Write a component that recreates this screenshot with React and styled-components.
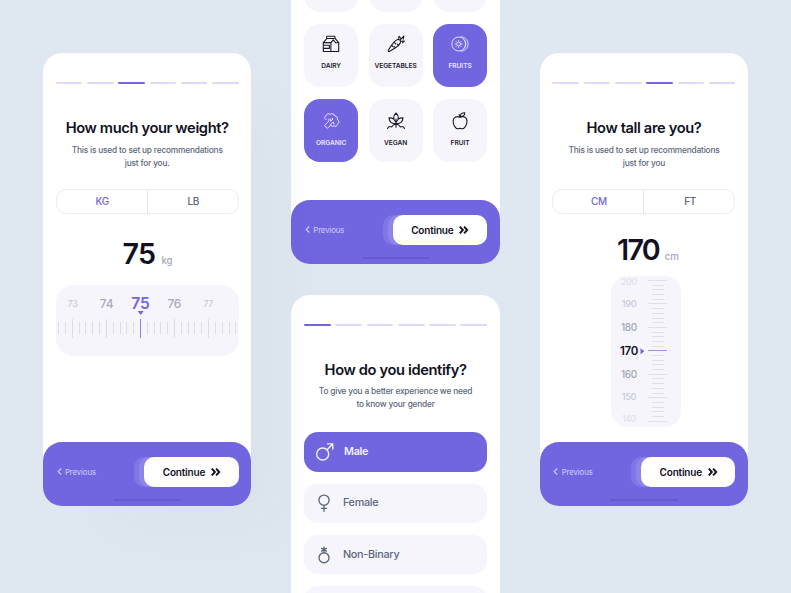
import React from "react";
import styled, { createGlobalStyle, css } from "styled-components";

const violet = "#7165e0";
const ink = "#11111f";
const slate = "#5b677b";
const tint = "#f6f5fb";

const GlobalStyle = createGlobalStyle`
  * { box-sizing: border-box; }
  html, body { margin: 0; background: #dfe8f1; }
  body { font-family: Inter, "Liberation Sans", sans-serif; overflow: hidden; }
  svg { display: block; flex: none; }
`;

const Board = styled.main`
  width: 791px;
  height: 593px;
  overflow: hidden;
  display: flex;
  align-items: flex-start;
  gap: 40px;
  padding-left: 43px;
  background: #dfe8f1;
`;

const Column = styled.div`
  display: flex;
  flex-direction: column;
  flex: none;
  width: 208.4px;
  gap: 31px;
`;

const Phone = styled.section`
  display: flex;
  flex-direction: column;
  flex: none;
  width: 208.4px;
  height: ${(p) => p.$height}px;
  margin-top: ${(p) => p.$top || 0}px;
  border-radius: 19px;
  background: #fff;
  ${(p) =>
    p.$raised &&
    css`
      position: relative;
      z-index: 1;
      box-shadow: 50px 36px 60px -14px rgba(70, 70, 90, 0.028);
    `}
`;

const Content = styled.div`
  display: flex;
  flex-direction: column;
  align-items: center;
  flex: 1;
  min-height: 0;
  padding: ${(p) => p.$top ?? 28.7}px 12.7px 0;
`;

const Steps = styled.div`
  display: flex;
  gap: 4.7px;
  width: 100%;
`;

const Step = styled.span`
  flex: 1;
  height: 2px;
  border-radius: 1px;
  background: ${(p) => (p.$active ? violet : "#dedafa")};
`;

const Title = styled.h1`
  margin: 34px 0 0;
  font-size: 14.7px;
  line-height: 20px;
  font-weight: 600;
  letter-spacing: -0.38px;
  white-space: nowrap;
  color: ${ink};
`;

const Intro = styled.p`
  margin: 5.6px 0 0;
  font-size: 8.3px;
  line-height: 13.2px;
  font-weight: 500;
  letter-spacing: -0.18px;
  text-align: center;
  white-space: nowrap;
  color: ${slate};
`;

const Toggle = styled.div`
  display: flex;
  width: 100%;
  height: 25px;
  margin-top: 18.6px;
  border: 1px solid #ebebf2;
  border-radius: 10px;
`;

const Unit = styled.button`
  flex: 1;
  padding: 0 0 0 1px;
  border: 0;
  background: none;
  font: 500 10px/23px Inter, sans-serif;
  letter-spacing: -0.35px;
  color: ${(p) => (p.$active ? violet : slate)};
  & + & { border-left: 1px solid #e4e4ee; }
`;

const Reading = styled.div`
  display: flex;
  align-items: baseline;
  gap: 6px;
  height: 36px;
  margin-top: ${(p) => p.$top}px;
  padding-left: ${(p) => p.$inset || 0}px;
  line-height: 36px;
`;

const Value = styled.strong`
  font-size: 28.7px;
  font-weight: 600;
  letter-spacing: ${(p) => p.$track}px;
  color: ${ink};
`;

const Suffix = styled.span`
  font-size: 9.7px;
  font-weight: 500;
  letter-spacing: -0.1px;
  color: #a5a8bd;
`;

const WeightRuler = styled.div`
  width: 100%;
  height: 70.3px;
  margin-top: 13px;
  padding-top: 8.4px;
  border-radius: 18px;
  background: ${tint};
  overflow: hidden;
`;

const WeightLabels = styled.div`
  display: grid;
  grid-template-columns: repeat(5, 33.9px);
  height: 19px;
  text-align: center;
  line-height: 19px;
`;

const WeightLabel = styled.span`
  font-size: ${(p) => p.$size}px;
  font-weight: ${(p) => (p.$active ? 600 : 500)};
  letter-spacing: -0.2px;
  color: ${(p) => p.$color};
`;

const DownPointer = styled.i`
  display: block;
  width: 6px;
  height: 4px;
  margin: -1.6px 0 0 82px;
  background: ${violet};
  clip-path: polygon(0 0, 100% 0, 50% 100%);
`;

const WeightTicks = styled.div`
  display: flex;
  align-items: center;
  height: 20px;
  margin-top: 3px;
  margin-left: -0.4px;
`;

const WeightTick = styled.span`
  display: flex;
  flex: 0 0 6.82px;
  justify-content: center;
  &::after {
    content: "";
    width: ${(p) => (p.$active ? 1.3 : 1)}px;
    height: ${(p) => (p.$major ? 19 : 12)}px;
    background: ${(p) => (p.$active ? "#8b80ea" : "#dcdce5")};
  }
`;

const HeightRuler = styled.div`
  display: flex;
  width: 70px;
  height: 151px;
  margin: 8px 0 0 4px;
  border-radius: 16px;
  background: ${tint};
  overflow: hidden;
`;

const HeightLabels = styled.div`
  width: 36px;
  display: flex;
  flex-direction: column;
  align-items: center;
  justify-content: space-between;
  padding: 0.5px 0 1.5px;
`;

const HeightLabel = styled.span`
  font-size: ${(p) => p.$size}px;
  line-height: ${(p) => p.$line}px;
  font-weight: ${(p) => (p.$active ? 600 : 500)};
  letter-spacing: -0.35px;
  color: ${(p) => p.$color};
`;

const HeightPointerCell = styled.div`
  display: flex;
  width: 2px;
  justify-content: center;
`;

const SidePointer = styled.i`
  align-self: center;
  flex: none;
  width: 4px;
  height: 6px;
  margin-right: 11px;
  background: ${violet};
  clip-path: polygon(0 0, 100% 50%, 0 100%);
`;

const HeightTicks = styled.div`
  display: flex;
  flex-direction: column;
  align-items: center;
  width: 17px;
  padding-top: 2.5px;
`;

const HeightTick = styled.span`
  display: flex;
  align-items: center;
  justify-content: center;
  flex: 0 0 4.69px;
  width: 19px;
  &::after {
    content: "";
    width: ${(p) => (p.$major ? 19 : 12)}px;
    height: 1px;
    margin-left: ${(p) => (p.$major ? 0 : 2)}px;
    background: ${(p) => (p.$active ? "#9b91ee" : "#e0e0e8")};
  }
`;

const FooterBar = styled.footer`
  flex: none;
  height: 64px;
  padding: 15px 12.7px 0;
  border-radius: 19px;
  background: ${violet};
`;

const Actions = styled.div`
  display: flex;
  align-items: center;
  justify-content: space-between;
`;

const Previous = styled.button`
  display: flex;
  align-items: center;
  gap: 3.2px;
  padding: 0 0 0 1px;
  border: 0;
  background: none;
  font: 400 7.8px/12px Inter, sans-serif;
  letter-spacing: -0.1px;
  color: #d3cff8;
`;

const Continue = styled.button`
  display: flex;
  align-items: center;
  justify-content: center;
  gap: 6px;
  width: 94.5px;
  height: 30px;
  padding: 0 0 0 1px;
  border: 0;
  border-radius: 10px;
  background: #fff;
  box-shadow: -5px 0 0 #8f85e9, -10px 0 0 #8176e5;
  font: 600 10px/30px Inter, sans-serif;
  letter-spacing: -0.2px;
  color: ${ink};
`;

const HomeBar = styled.div`
  width: 68px;
  height: 2px;
  margin: 12.5px auto 0;
  border-radius: 1px;
  background: #665acf;
`;

const FoodGrid = styled.div`
  display: grid;
  grid-template-columns: repeat(3, 54px);
  grid-auto-rows: 63px;
  justify-content: space-between;
  row-gap: 12.3px;
  width: 100%;
`;

const FoodCard = styled.button`
  display: flex;
  flex-direction: column;
  align-items: center;
  gap: ${(p) => (p.$low ? 6.5 : 7.5)}px;
  padding: ${(p) => (p.$low ? 12 : 10)}px 0 0;
  border: 0;
  border-radius: 16px;
  background: ${(p) => (p.$active ? violet : tint)};
  color: ${(p) => (p.$active ? "#e9e6fd" : "#1b1b2b")};
  font: 600 6.6px/10px Inter, sans-serif;
  letter-spacing: -0.04px;
  white-space: nowrap;
`;

const Choices = styled.div`
  display: flex;
  flex-direction: column;
  gap: 12px;
  width: 100%;
  margin-top: 20.6px;
`;

const Choice = styled.button`
  display: flex;
  align-items: center;
  gap: ${(p) => (p.$active ? 9.5 : 8.8)}px;
  flex: none;
  height: 39.4px;
  padding: 0 0 0 ${(p) => (p.$active ? 10.5 : 10)}px;
  border: 0;
  border-radius: 14px;
  background: ${(p) => (p.$active ? violet : tint)};
  color: ${(p) => (p.$active ? "#f3f1ff" : slate)};
  font: ${(p) => (p.$active ? 600 : 500)} 10.8px/16px Inter, sans-serif;
  letter-spacing: ${(p) => (p.$active ? -0.35 : -0.27)}px;
`;

function Icon({ children, size = 20, weight = 1.1 }) {
  return (
    <svg width={size} height={size} viewBox="0 0 20 20" fill="none" stroke="currentColor"
      strokeWidth={weight} strokeLinecap="round" strokeLinejoin="round">
      {children}
    </svg>
  );
}

const icons = {
  dairy: (
    <Icon>
      <rect x="5.6" y="2.3" width="8.4" height="2.2" rx=".7" />
      <path d="M5.8 4.6 2.3 8.6v8.9h15.4V8.6l-3.5-4M2.3 8.6h7.6M9.9 17.5V8.8l2.3-2.9 2.6 2.9M14.8 8.8h2.9M2.5 11.3h5.9v3.1H2.5" />
    </Icon>
  ),
  carrot: (
    <Icon>
      <path d="M11.6 5.5C8.4 6.5 5.6 10.4 2.3 16.4c-.4 1 .1 1.4 1 1C9 14.5 13.3 11.9 14.4 8.8c.5-2.1-.7-3.7-2.8-3.3ZM12.6 5.3l.4-3.1 1.4 1.6M14 6l3.8-3.8-.5 3M14.6 7.3l3.7-.2-1.8 1.8M8.2 8.5l1.5 1.4M5.8 11.5l1.4 1.3M9.5 13.8 8.3 12.5M12.4 11.4 11.2 10" />
    </Icon>
  ),
  kiwi: (
    <Icon weight={0.9}>
      <circle cx="8.8" cy="10" r="7" />
      <path d="M11 2.9c3.8-.3 7 2.8 7 7.1s-3.2 7.4-7 7.1M13.4 4.7c2.9 2.9 2.9 7.7 0 10.6" />
      <circle cx="8.6" cy="10" r="1.9" />
      <path d="M8.6 6.5v.6M8.6 12.9v.6M5.1 10h.6M11.5 10h.6M6.1 7.5l.4.4M10.7 12.1l.4.4M6.1 12.5l.4-.4M10.7 7.9l.4-.4" />
    </Icon>
  ),
  broccoli: (
    <Icon weight={1}>
      <path d="M5.2 8.6C3.2 8.2 3 5.6 4.9 5c.2-2.3 2.9-3 4.3-1.6 1.6-1.3 4.3-.5 4.7 1.6 2 0 3.1 1.8 2.4 3.5 2 .9 2.1 3.7.2 4.6-.1 2-2.2 2.9-3.7 1.8-1.3.8-2.7.2-3.1-.9l-2.2 2.6c-1.2 1-2.3.5-2.3-.7-1.4-.1-1.8-1.4-.9-2.3l3.4-3.4c.5-.6.4-1.4-.3-2.2M9.2 7.8l.5 2.4 1.5-1.6M9.7 14c0-1.4.8-2.3 2.6-2.7M11.3 8.6l.2-1.3M13 13.2l-.7-1.9" />
    </Icon>
  ),
  vegan: (
    <Icon>
      <path d="M10 2c-3.1 3-3.1 6.6 0 9.4 3.1-2.8 3.1-6.4 0-9.4ZM7.6 8C6.2 7 4.7 6.7 3 6.9c.2 3.8 2.8 6.1 7 5.6 4.2.5 6.8-1.8 7-5.6-1.7-.2-3.2.1-4.6 1.1M10 8v8.2M1.5 17.5c.8-1.8 2.4-2.3 4.1-1.6 1-1.9 2.6-2.9 4.4-3.2 1.8.3 3.4 1.3 4.4 3.2 1.7-.7 3.3-.2 4.1 1.6" />
    </Icon>
  ),
  apple: (
    <Icon>
      <path d="M10 6.4C7.4 4.7 3.2 6 3.1 10.1c0 3.7 2.4 7.7 4.9 7.7.8 0 1.2-.4 2-.4s1.3.4 2.1.4c2.5 0 4.9-4 4.9-7.7C16.9 6 12.6 4.7 10 6.4ZM10 6.4c0-1.3-.3-2-1-2.8M10.3 5.5c.1-2.3 1.8-3.8 4.5-3.8.1 2.5-1.8 3.9-4.5 3.8Z" />
    </Icon>
  ),
  male: (
    <Icon weight={1.4}>
      <circle cx="7.7" cy="12" r="6" />
      <path d="m12 7.7 5.8-5.8M12.6 1.9h5.2v5.2" />
    </Icon>
  ),
  female: (
    <Icon weight={1.35}>
      <circle cx="10" cy="7.2" r="5.1" />
      <path d="M10 12.3v6M7.5 15.4h5" />
    </Icon>
  ),
  nonBinary: (
    <Icon weight={1.35}>
      <circle cx="10" cy="12.7" r="5" />
      <path d="M10 7.7V2.2M7.6 3.3l4.8 2.8M12.4 3.3 7.6 6.1" />
    </Icon>
  ),
};

function Progress({ current }) {
  return (
    <Steps>
      {[0, 1, 2, 3, 4, 5].map((i) => <Step key={i} $active={i === current} />)}
    </Steps>
  );
}

function Footer() {
  return (
    <FooterBar>
      <Actions>
        <Previous>
          <svg width="5" height="7" viewBox="0 0 5 7" fill="none" stroke="currentColor" strokeWidth="1.1">
            <path d="M4.2.5 1.2 3.5l3 3" />
          </svg>
          Previous
        </Previous>
        <Continue>
          Continue
          <svg width="10" height="8" viewBox="0 0 10 8" fill="none" stroke="currentColor" strokeWidth="1.9">
            <path d="M.8.6 3.9 4 .8 7.4M5.1.6 8.2 4 5.1 7.4" />
          </svg>
        </Continue>
      </Actions>
      <HomeBar />
    </FooterBar>
  );
}

function UnitToggle({ units }) {
  return (
    <Toggle>
      <Unit $active>{units[0]}</Unit>
      <Unit>{units[1]}</Unit>
    </Toggle>
  );
}

const weights = [
  [73, 9, "#c9cad8"],
  [74, 12, "#a9abbd"],
  [75, 15.5, violet],
  [76, 12, "#a9abbd"],
  [77, 9, "#c9cad8"],
];

const heights = [
  [200, 9, 12, "#e0e0ea"],
  [190, 9.3, 14, "#cacbd9"],
  [180, 10, 14, "#a3a6b9"],
  [170, 11.5, 16, ink],
  [160, 10, 14, "#a3a6b9"],
  [150, 9.3, 14, "#cacbd9"],
  [140, 8.5, 12, "#e0e0ea"],
];

const foods = [
  { name: "DAIRY", icon: "dairy" },
  { name: "VEGETABLES", icon: "carrot" },
  { name: "FRUITS", icon: "kiwi", active: true },
  { name: "ORGANIC", icon: "broccoli", active: true, low: true },
  { name: "VEGAN", icon: "vegan", low: true },
  { name: "FRUIT", icon: "apple", low: true },
];

function WeightScreen() {
  return (
    <Phone $height={452.2} $top={53.4} $raised>
      <Content>
        <Progress current={2} />
        <Title>How much your weight?</Title>
        <Intro>This is used to set up recommendations<br />just for you.</Intro>
        <UnitToggle units={["KG", "LB"]} />
        <Reading $top={22.6} $inset={0.5}>
          <Value $track={-0.7}>75</Value>
          <Suffix>kg</Suffix>
        </Reading>
        <WeightRuler>
          <WeightLabels>
            {weights.map(([n, size, color]) => (
              <WeightLabel key={n} $size={size} $color={color} $active={n === 75}>{n}</WeightLabel>
            ))}
          </WeightLabels>
          <DownPointer />
          <WeightTicks>
            {Array.from({ length: 27 }, (_, i) => (
              <WeightTick key={i} $major={i % 5 === 2} $active={i === 12} />
            ))}
          </WeightTicks>
        </WeightRuler>
      </Content>
      <Footer />
    </Phone>
  );
}

function FoodScreen() {
  return (
    <Phone $height={363.6} $top={-100}>
      <Content $top={48.5}>
        <FoodGrid>
          <FoodCard /><FoodCard /><FoodCard />
          {foods.map((f) => (
            <FoodCard key={f.name} $active={f.active} $low={f.low}>
              {icons[f.icon]}
              {f.name}
            </FoodCard>
          ))}
        </FoodGrid>
      </Content>
      <Footer />
    </Phone>
  );
}

function GenderScreen() {
  return (
    <Phone $height={452} $top={0.3}>
      <Content>
        <Progress current={0} />
        <Title>How do you identify?</Title>
        <Intro>To give you a better experience we need<br />to know your gender</Intro>
        <Choices>
          <Choice $active>{icons.male}Male</Choice>
          <Choice>{icons.female}Female</Choice>
          <Choice>{icons.nonBinary}Non-Binary</Choice>
          <Choice />
        </Choices>
      </Content>
    </Phone>
  );
}

function HeightScreen() {
  return (
    <Phone $height={452.2} $top={53.4}>
      <Content>
        <Progress current={3} />
        <Title>How tall are you?</Title>
        <Intro>This is used to set up recommendations<br />just for you</Intro>
        <UnitToggle units={["CM", "FT"]} />
        <Reading $top={18} $inset={8}>
          <Value $track={-1.8}>170</Value>
          <Suffix>cm</Suffix>
        </Reading>
        <HeightRuler>
          <HeightLabels>
            {heights.map(([n, size, line, color]) => (
              <HeightLabel key={n} $size={size} $line={line} $color={color} $active={n === 170}>{n}</HeightLabel>
            ))}
          </HeightLabels>
          <HeightPointerCell><SidePointer /></HeightPointerCell>
          <HeightTicks>
            {Array.from({ length: 31 }, (_, i) => (
              <HeightTick key={i} $major={i % 5 === 0} $active={i === 15} />
            ))}
          </HeightTicks>
        </HeightRuler>
      </Content>
      <Footer />
    </Phone>
  );
}

export default function App() {
  return (
    <>
      <GlobalStyle />
      <Board>
        <WeightScreen />
        <Column>
          <FoodScreen />
          <GenderScreen />
        </Column>
        <HeightScreen />
      </Board>
    </>
  );
}
